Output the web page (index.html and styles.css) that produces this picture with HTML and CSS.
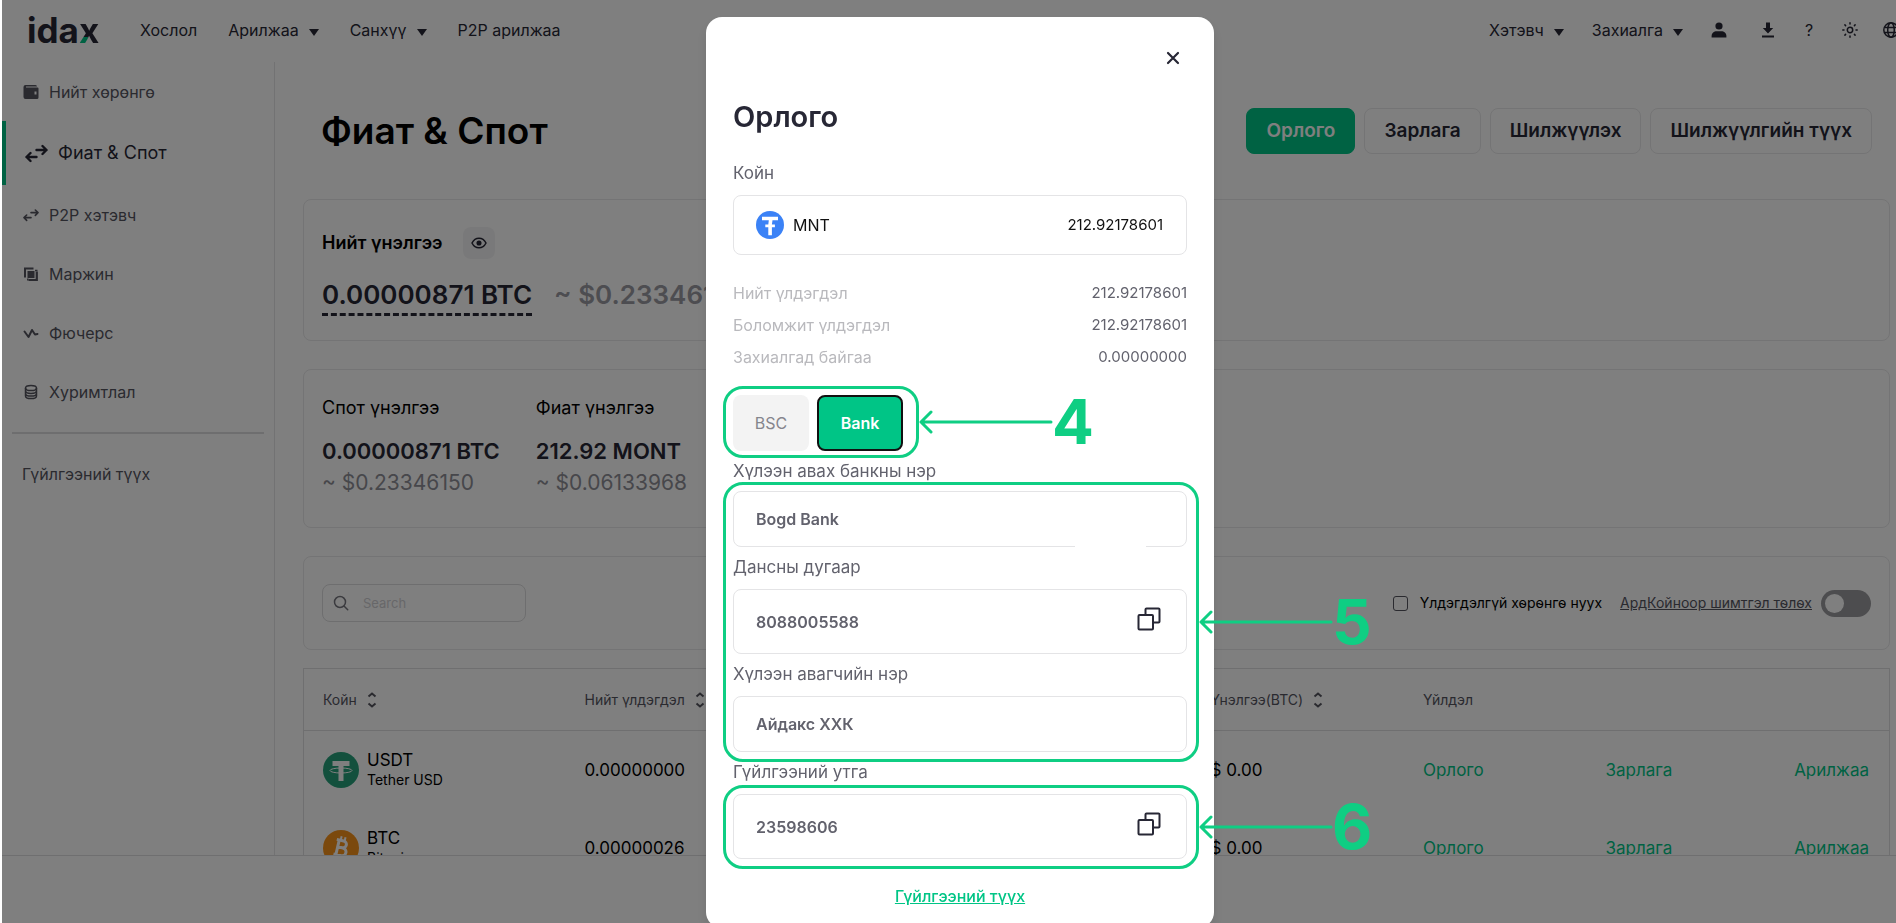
FILE: index.html
```html
<!DOCTYPE html>
<html lang="mn">
<head>
<meta charset="utf-8">
<title>idax</title>
<link rel="stylesheet" href="styles.css">
</head>
<body>
<div class="app">
  <header class="topbar">
    <a class="logo" href="#">ida<span class="logo-x">x</span></a>
    <nav class="nav">
      <a href="#">Хослол</a>
      <a href="#">Арилжаа<i class="caret"></i></a>
      <a href="#">Санхүү<i class="caret"></i></a>
      <a href="#">P2P арилжаа</a>
    </nav>
    <div class="tools">
      <a class="tool-link" href="#">Хэтэвч<i class="caret"></i></a>
      <a class="tool-link" href="#">Захиалга<i class="caret"></i></a>
      <button class="tool" aria-label="Profile"><svg width="16" height="16" viewBox="0 0 16 16"><circle cx="8" cy="4" r="3.600" fill="currentColor"/><path d="M0.600 15.500v-1.500c0-3 2.400-4.800 5-4.800h4.800c2.600 0 5 1.800 5 4.800v1.500z" fill="currentColor"/></svg></button>
      <button class="tool" aria-label="Download"><svg width="16" height="16" viewBox="0 0 16 16"><path d="M6 0.500h4v5.500h3.200L8 11.600 2.800 6H6zM2 13.600h12v1.900H2z" fill="currentColor"/></svg></button>
      <button class="tool" aria-label="Help">?</button>
      <button class="tool" aria-label="Theme"><svg width="16" height="16" viewBox="0 0 16 16" fill="none" stroke="currentColor" stroke-width="1.500" stroke-linecap="round"><circle cx="8" cy="8" r="2.700"/><path d="M8 .8v1.200M8 14v1.200M.8 8h1.200M14 8h1.200M2.900 2.900l.7.7M12.400 12.400l.7.7M2.900 13.100l.7-.7M12.400 3.600l.7-.7"/></svg></button>
      <button class="tool" aria-label="Language"><svg width="16" height="16" viewBox="0 0 16 16" fill="none" stroke="currentColor" stroke-width="1.500"><circle cx="8" cy="8" r="7.200"/><ellipse cx="8" cy="8" rx="3.300" ry="7.200"/><path d="M1.500 5.500h13M1.500 10.500h13"/></svg></button>
    </div>
  </header>

  <div class="body">
    <aside class="sidebar">
      <a class="side-item" href="#"><svg width="16" height="16" viewBox="0 0 16 16"><path d="M2.500 1h10a1.500 1.500 0 0 1 1.500 1.500H3v1h11.500a1 1 0 0 1 1 1v9a1.500 1.500 0 0 1-1.500 1.500H2.500A2 2 0 0 1 .5 13V3a2 2 0 0 1 2-2zM11.500 7.500v3h2v-3z" fill="currentColor" fill-rule="evenodd"/></svg>Нийт хөрөнгө</a>
      <a class="side-item active" href="#"><svg width="24" height="20" viewBox="0 0 24 20" fill="none" stroke="currentColor" stroke-width="2.400" stroke-linecap="round" stroke-linejoin="round"><path d="M12.500 7h10M18.500 3l4 4-4 4M12.500 14h-10M6.500 10l-4 4 4 4"/></svg>Фиат &amp; Спот</a>
      <a class="side-item" href="#"><svg width="16" height="16" viewBox="0 0 24 20" fill="none" stroke="currentColor" stroke-width="2.400" stroke-linecap="round" stroke-linejoin="round"><path d="M12 6.500h10.500M18.500 2.500l4 4-4 4M12 14H1.500M5.500 10l-4 4 4 4"/></svg>P2P хэтэвч</a>
      <a class="side-item" href="#"><svg width="16" height="16" viewBox="0 0 16 16" fill="none" stroke="currentColor"><path d="M2 11.500V2.500h8.500" stroke-width="2"/><path d="M13.800 5.500v8.500H5.500" stroke-width="2.200"/><path d="M12 4.600h2.500M4.800 12.500v2" stroke-width="1.500"/><rect x="5" y="5.500" width="6" height="6" fill="currentColor"/></svg>Маржин</a>
      <a class="side-item" href="#"><svg width="16" height="16" viewBox="0 0 16 16" fill="none" stroke="currentColor" stroke-width="2" stroke-linecap="round" stroke-linejoin="round"><path d="M1.500 6.500l4 5.500 3.500-7 3 4.500 2.500-.5"/></svg>Фючерс</a>
      <a class="side-item" href="#"><svg width="16" height="16" viewBox="0 0 16 16" fill="none" stroke="currentColor" stroke-width="1.500"><ellipse cx="8" cy="4" rx="5.500" ry="2.600"/><path d="M2.500 4v8c0 1.500 2.500 2.600 5.500 2.600s5.500-1.100 5.500-2.600V4M2.500 6.800c0 1.500 2.500 2.600 5.500 2.600s5.500-1.100 5.500-2.600M2.500 9.500c0 1.500 2.500 2.600 5.500 2.600s5.500-1.100 5.500-2.600"/></svg>Хуримтлал</a>
      <hr class="side-rule">
      <a class="side-history" href="#">Гүйлгээний түүх</a>
    </aside>

    <main class="main">
      <div class="title-row">
        <h1>Фиат &amp; Спот</h1>
        <div class="actions">
          <button class="btn primary">Орлого</button>
          <button class="btn">Зарлага</button>
          <button class="btn">Шилжүүлэх</button>
          <button class="btn">Шилжүүлгийн түүх</button>
        </div>
      </div>

      <section class="card total">
        <div class="total-head">Нийт үнэлгээ
          <button class="eye" aria-label="Show"><svg width="16" height="16" viewBox="0 0 16 16" fill="none" stroke="currentColor" stroke-width="1.500"><path d="M1 8c1.500-3 4-4.800 7-4.800S13.500 5 15 8c-1.500 3-4 4.800-7 4.800S2.500 11 1 8z"/><circle cx="8" cy="8" r="1.800" fill="currentColor"/></svg></button>
        </div>
        <div class="total-value"><strong>0.00000871 BTC</strong><span>~ $0.23346150</span></div>
      </section>

      <section class="card split">
        <div class="stat"><h2>Спот үнэлгээ</h2><strong>0.00000871 BTC</strong><span>~ $0.23346150</span></div>
        <div class="stat"><h2>Фиат үнэлгээ</h2><strong>212.92 MONT</strong><span>~ $0.06133968</span></div>
      </section>

      <section class="card filters">
        <label class="search"><svg width="16" height="16" viewBox="0 0 16 16" fill="none" stroke="currentColor" stroke-width="1.500" stroke-linecap="round"><circle cx="7" cy="7" r="5.500"/><path d="M11.200 11.200l3.500 3.500"/></svg><input type="search" placeholder="Search" aria-label="Search"></label>
        <div class="filter-right">
          <label class="hide-zero"><input type="checkbox">Үлдэгдэлгүй хөрөнгө нуух</label>
          <a class="fee" href="#">АрдКойноор шимтгэл төлөх</a>
          <input class="switch" type="checkbox" aria-label="АрдКойноор шимтгэл төлөх">
        </div>
      </section>

      <table class="assets">
        <colgroup><col class="c-coin"><col class="c-total"><col class="c-value"><col class="c-act"></colgroup>
        <thead>
          <tr>
            <th><span class="sortable">Койн<svg class="sort" width="10" height="16" viewBox="0 0 10 16"><path d="M1.500 4.500L5 1.500 8.500 4.500M1.500 11.500L5 14.500 8.500 11.500"/></svg></span></th>
            <th><span class="sortable">Нийт үлдэгдэл<svg class="sort" width="10" height="16" viewBox="0 0 10 16"><path d="M1.500 4.500L5 1.500 8.500 4.500M1.500 11.500L5 14.500 8.500 11.500"/></svg></span></th>
            <th><span class="sortable">Үнэлгээ(BTC)<svg class="sort" width="10" height="16" viewBox="0 0 10 16"><path d="M1.500 4.500L5 1.500 8.500 4.500M1.500 11.500L5 14.500 8.500 11.500"/></svg></span></th>
            <th>Үйлдэл</th>
          </tr>
        </thead>
        <tbody>
          <tr>
            <td><div class="coin"><svg width="36" height="36" viewBox="0 0 36 36"><circle cx="18" cy="18" r="18" fill="#26a17b"/><path d="M9.500 9h17v5h-6v15h-5V14h-6z" fill="#fff"/><ellipse cx="18" cy="18.500" rx="11" ry="2.500" fill="none" stroke="#fff" stroke-width="1"/></svg><div><b>USDT</b><small>Tether USD</small></div></div></td>
            <td>0.00000000</td>
            <td>$ 0.00</td>
            <td><div class="row-actions"><a href="#">Орлого</a><a href="#">Зарлага</a><a href="#">Арилжаа</a></div></td>
          </tr>
          <tr>
            <td><div class="coin"><svg width="36" height="36" viewBox="0 0 36 36"><circle cx="18" cy="18" r="18" fill="#f7931a"/><g transform="rotate(13 18 18)" fill="none" stroke="#fff" stroke-width="3"><path d="M14.500 10.500v15M12 10.500h7a3.500 3.500 0 0 1 0 7h-4.500M19 17.500h.8a4 4 0 0 1 0 8H12"/><path d="M16 6.500v4M20 6.500v4M16 25.500v4M20 25.500v4" stroke-width="2"/></g></svg><div><b>BTC</b><small>Bitcoin</small></div></div></td>
            <td>0.00000026</td>
            <td>$ 0.00</td>
            <td><div class="row-actions"><a href="#">Орлого</a><a href="#">Зарлага</a><a href="#">Арилжаа</a></div></td>
          </tr>
        </tbody>
      </table>
    </main>
  </div>
  <footer class="footer"></footer>
</div>

<div class="overlay">
  <div class="modal" role="dialog" aria-labelledby="dlg-title">
    <div class="modal-top"><button class="close" aria-label="Close"><svg width="14" height="14" viewBox="0 0 14 14" fill="none" stroke="currentColor" stroke-width="2.200" stroke-linecap="round"><path d="M2 2l10 10M12 2L2 12"/></svg></button></div>
    <h2 id="dlg-title">Орлого</h2>
    <div class="label">Койн</div>
    <button class="coin-select"><svg width="28" height="28" viewBox="0 0 28 28"><circle cx="14" cy="14" r="14" fill="#3b82f6"/><path d="M6 5.800h16v3.400h-5.500l-.6 4.300h3v2.700h-3v8h-3.600v-8h-3v-2.700h3l.5-4.300H6z" fill="#fff"/></svg><span>MNT</span><span class="coin-amount">212.92178601</span></button>
    <dl class="balances">
      <div><dt>Нийт үлдэгдэл</dt><dd>212.92178601</dd></div>
      <div><dt>Боломжит үлдэгдэл</dt><dd>212.92178601</dd></div>
      <div><dt>Захиалгад байгаа</dt><dd>0.00000000</dd></div>
    </dl>
    <div class="networks step">
      <button class="net">BSC</button><button class="net selected">Bank</button>
      <div class="mark"><svg class="arrow" width="134" height="26" viewBox="0 0 134 26"><path d="M132 13H2M12 3L2 13l10 10"/></svg><b>4</b></div>
    </div>
    <label class="label" for="bank">Хүлээн авах банкны нэр</label>
    <div class="step">
      <div class="field gap"><input id="bank" value="Bogd Bank" readonly></div>
      <label class="label" for="acct">Дансны дугаар</label>
      <div class="field tall"><input id="acct" value="8088005588" readonly><button class="copy" aria-label="Copy"><svg width="24" height="24" viewBox="0 0 24 24" fill="none" stroke="currentColor" stroke-width="2"><rect x="1.500" y="8" width="14.500" height="14.500" rx="1"/><path d="M8.500 8V2.500a1 1 0 0 1 1-1h12a1 1 0 0 1 1 1v12a1 1 0 0 1-1 1H16"/></svg></button></div>
      <label class="label" for="holder">Хүлээн авагчийн нэр</label>
      <div class="field"><input id="holder" value="Айдакс ХХК" readonly></div>
      <div class="mark"><svg class="arrow" width="134" height="26" viewBox="0 0 134 26"><path d="M132 13H2M12 3L2 13l10 10"/></svg><b>5</b></div>
    </div>
    <label class="label" for="memo">Гүйлгээний утга</label>
    <div class="step">
      <div class="field tall"><input id="memo" value="23598606" readonly><button class="copy" aria-label="Copy"><svg width="24" height="24" viewBox="0 0 24 24" fill="none" stroke="currentColor" stroke-width="2"><rect x="1.500" y="8" width="14.500" height="14.500" rx="1"/><path d="M8.500 8V2.500a1 1 0 0 1 1-1h12a1 1 0 0 1 1 1v12a1 1 0 0 1-1 1H16"/></svg></button></div>
      <div class="mark"><svg class="arrow" width="134" height="26" viewBox="0 0 134 26"><path d="M132 13H2M12 3L2 13l10 10"/></svg><b>6</b></div>
    </div>
    <a class="history" href="#">Гүйлгээний түүх</a>
  </div>
</div>
</body>
</html>
```

FILE: styles.css
```css
* { box-sizing: border-box; }
body {
  margin: 0;
  height: 100vh;
  overflow: hidden;
  padding-left: 2px;
  background: #fff;
  color: #000;
  font: 16px/20px Inter, "Noto Sans", sans-serif;
}
h1, h2, dl, dd { margin: 0; }
a { color: inherit; text-decoration: none; }
button, input { font: inherit; color: inherit; }
button { cursor: pointer; }
svg { flex: none; display: block; }

.app { height: 100%; display: flex; flex-direction: column; }

/* top bar */
.topbar { height: 62px; flex: none; display: flex; align-items: center; padding: 0 0 2px 25px; color: #272735; }
.logo { width: 113px; font: 700 35px/40px Inter, sans-serif; }
.logo-x {
  background: conic-gradient(from 180deg at 46% 66%, #00c586 0 90deg, #272735 0);
  -webkit-background-clip: text;
  background-clip: text;
  color: transparent;
}
.nav { display: flex; gap: 31px; }
.nav a, .tool-link { display: flex; align-items: center; gap: 10px; white-space: nowrap; }
.caret { border: 5px solid transparent; border-top: 7px solid currentColor; border-bottom: 0; margin-top: 4px; }
.tools { margin-left: auto; margin-right: -3px; display: flex; align-items: center; }
.tool-link { margin-right: 28px; }
.tool { border: 0; background: none; padding: 0; width: 16px; margin-left: 25px; }
.tool-link + .tool { margin-left: 0; margin-right: 8px; }

.body { flex: 1; min-height: 0; display: flex; overflow: hidden; }

/* sidebar */
.sidebar { width: 273px; flex: none; border-right: 1px solid #e4e4e6; color: #55555f; }
.side-item { display: flex; align-items: center; gap: 10px; height: 59px; padding-left: 21px; }
.side-item.active { height: 64px; border-left: 4px solid #00c586; padding-left: 18px; font-size: 18px; color: #272735; }
.side-rule { margin: 11px 10px 0; border: 0; border-top: 2px solid #dcdcde; }
.side-history { display: block; margin-top: 30px; padding-left: 20px; }

/* main */
.main { flex: 1; min-width: 0; padding: 0 6px 0 28px; }
.title-row { height: 137px; display: flex; align-items: center; justify-content: space-between; padding: 0 18px; }
h1 { font-size: 37px; line-height: 44px; font-weight: 600; }
.actions { display: flex; gap: 9px; }
.btn { height: 46px; padding: 0 19px; border: 1px solid #e8e8ea; border-radius: 8px; background: #fff; color: #272735; font-size: 19px; font-weight: 600; }
.btn.primary { background: #00c586; border-color: #00c586; color: #fff; }
.card { border: 1px solid #e8e8ea; border-radius: 8px; padding: 0 18px; }
.total { height: 142px; padding-top: 27px; }
.total-head { display: flex; align-items: center; gap: 20px; font-size: 18px; font-weight: 600; }
.eye { width: 32px; height: 32px; border: 0; border-radius: 8px; background: #f3f3f4; padding: 0 8px; color: #272735; }
.total-value { display: flex; align-items: flex-start; gap: 22px; margin-top: 18px; font-size: 26px; line-height: 36px; }
.total-value strong { font-weight: 600; color: #272735; border-bottom: 3px dashed #272735; }
.total-value span { font-weight: 600; color: #9a9aa2; }
.split { margin-top: 28px; height: 159px; padding-top: 28px; display: flex; gap: 36px; }
.stat { display: flex; flex-direction: column; font-size: 22px; line-height: 32px; }
.stat h2 { font-size: 18px; line-height: 20px; font-weight: 400; margin-bottom: 17px; }
.stat strong { font-weight: 600; color: #272735; }
.stat span { font-size: 21px; color: #8e8e96; }
.filters { margin-top: 28px; height: 94px; display: flex; align-items: center; justify-content: space-between; }
.search { display: flex; align-items: center; gap: 12px; width: 204px; height: 38px; border: 1px solid #dcdcde; border-radius: 8px; padding: 0 10px; color: #77777f; }
.search input { border: 0; outline: 0; background: none; width: 100%; min-width: 0; font-size: 13px; }
.search input::placeholder { color: #cfcfd3; }
.filter-right { display: flex; align-items: center; font-size: 14px; }
.hide-zero { display: flex; align-items: center; gap: 12px; }
.hide-zero input { appearance: none; width: 15px; height: 15px; margin: 0; border: 1px solid #55555f; border-radius: 3px; }
.fee { margin-left: 18px; text-decoration: underline; color: #55555f; }
.switch { appearance: none; display: flex; width: 50px; height: 27px; margin: 0 0 0 9px; padding: 4px; border-radius: 14px; background: #9b9b9f; }
.switch::before { content: ""; width: 19px; height: 19px; border-radius: 50%; background: #fff; }

.assets { margin-top: 18px; width: 100%; table-layout: fixed; border: 1px solid #dedee0; border-spacing: 0; }
.c-coin { width: 16.5%; }
.c-total { width: 39.5%; }
.c-value { width: 13.4%; }
.assets th, .assets td { padding: 0 20px 0 19px; text-align: left; }
.assets th { height: 62px; font-size: 14px; font-weight: 400; color: #55555f; border-bottom: 1px solid #dedee0; }
.assets td { height: 78px; font-size: 17px; }
.sortable { display: flex; align-items: center; gap: 10px; }
.sort { fill: none; stroke: currentColor; stroke-width: 2; }
.coin { display: flex; align-items: center; gap: 8px; }
.coin b, .coin small { display: block; font-weight: 400; }
.coin small { font-size: 14px; }
.row-actions { display: flex; justify-content: space-between; color: #00c586; }

.footer { height: 68px; flex: none; border-top: 1px solid #dedee0; }

/* deposit dialog */
.overlay { position: fixed; inset: 0 0 0 2px; padding: 17px 0 0 22px; background: rgba(0, 0, 0, .5); display: flex; justify-content: center; align-items: flex-start; }
.modal { width: 508px; padding: 25px 27px 22px; border-radius: 16px; background: #fff; box-shadow: 0 6px 12px rgba(0, 0, 0, .1); color: #62626d; line-height: 20px; }
.modal-top { display: flex; justify-content: flex-end; }
.close { border: 0; background: none; padding: 9px 7px; color: #272735; }
.modal h2 { margin-top: 25px; font-size: 29px; line-height: 36px; font-weight: 600; color: #272735; }
.label { display: block; height: 42px; padding-top: 10px; font-size: 17px; }
h2 + .label { height: 60px; padding-top: 28px; }
.networks + .label { height: 40px; }
.coin-select { display: flex; align-items: center; gap: 9px; width: 100%; height: 60px; padding: 0 23px 0 22px; border: 1px solid #e4e4e6; border-radius: 8px; background: #fff; color: #111; }
.coin-amount { margin-left: auto; font-size: 15px; }
.balances { margin: 22px 0 22px; }
.balances div { display: flex; justify-content: space-between; line-height: 32px; }
.balances dt { color: #b9b9bd; }
.balances dd { font-size: 15px; }
.step { position: relative; }
.networks { display: flex; gap: 8px; width: max-content; }
.net { height: 56px; min-width: 76px; padding: 0 20px; border: 0; border-radius: 8px; background: #f3f3f3; color: #85858d; }
.net.selected { min-width: 86px; border: 2px solid #111; background: #00c586; color: #fff; font-weight: 600; }
.field { position: relative; display: flex; align-items: center; height: 56px; padding: 0 22px; border: 1px solid #e4e4e6; border-radius: 8px; }
.field.tall { height: 65px; }
.field.gap::after { content: ""; position: absolute; right: 40px; bottom: -1px; width: 71px; height: 1px; background: #fff; }
.field input { flex: 1; min-width: 0; border: 0; outline: 0; padding: 0; background: none; font-weight: 600; }
.copy { border: 0; background: none; padding: 0 3px 6px; color: #272735; }
.history { display: block; margin-top: 27px; text-align: center; text-decoration: underline; font-weight: 500; color: #00c586; }

/* numbered callouts around dialog sections */
.mark { position: absolute; inset: -9px -12px -10px -10px; border: 3px solid #0fce83; border-radius: 20px; pointer-events: none; }
.networks .mark { right: -16px; bottom: -7px; }
.mark .arrow, .mark b { position: absolute; top: 50%; }
.arrow { left: 100%; margin: -13px 0 0 3px; fill: none; stroke: #0fce83; stroke-width: 3; stroke-linecap: round; stroke-linejoin: round; }
.mark b { left: 100%; margin: -32px 0 0 136px; font: 700 62px/64px Inter, sans-serif; color: #0fce83; }
```
